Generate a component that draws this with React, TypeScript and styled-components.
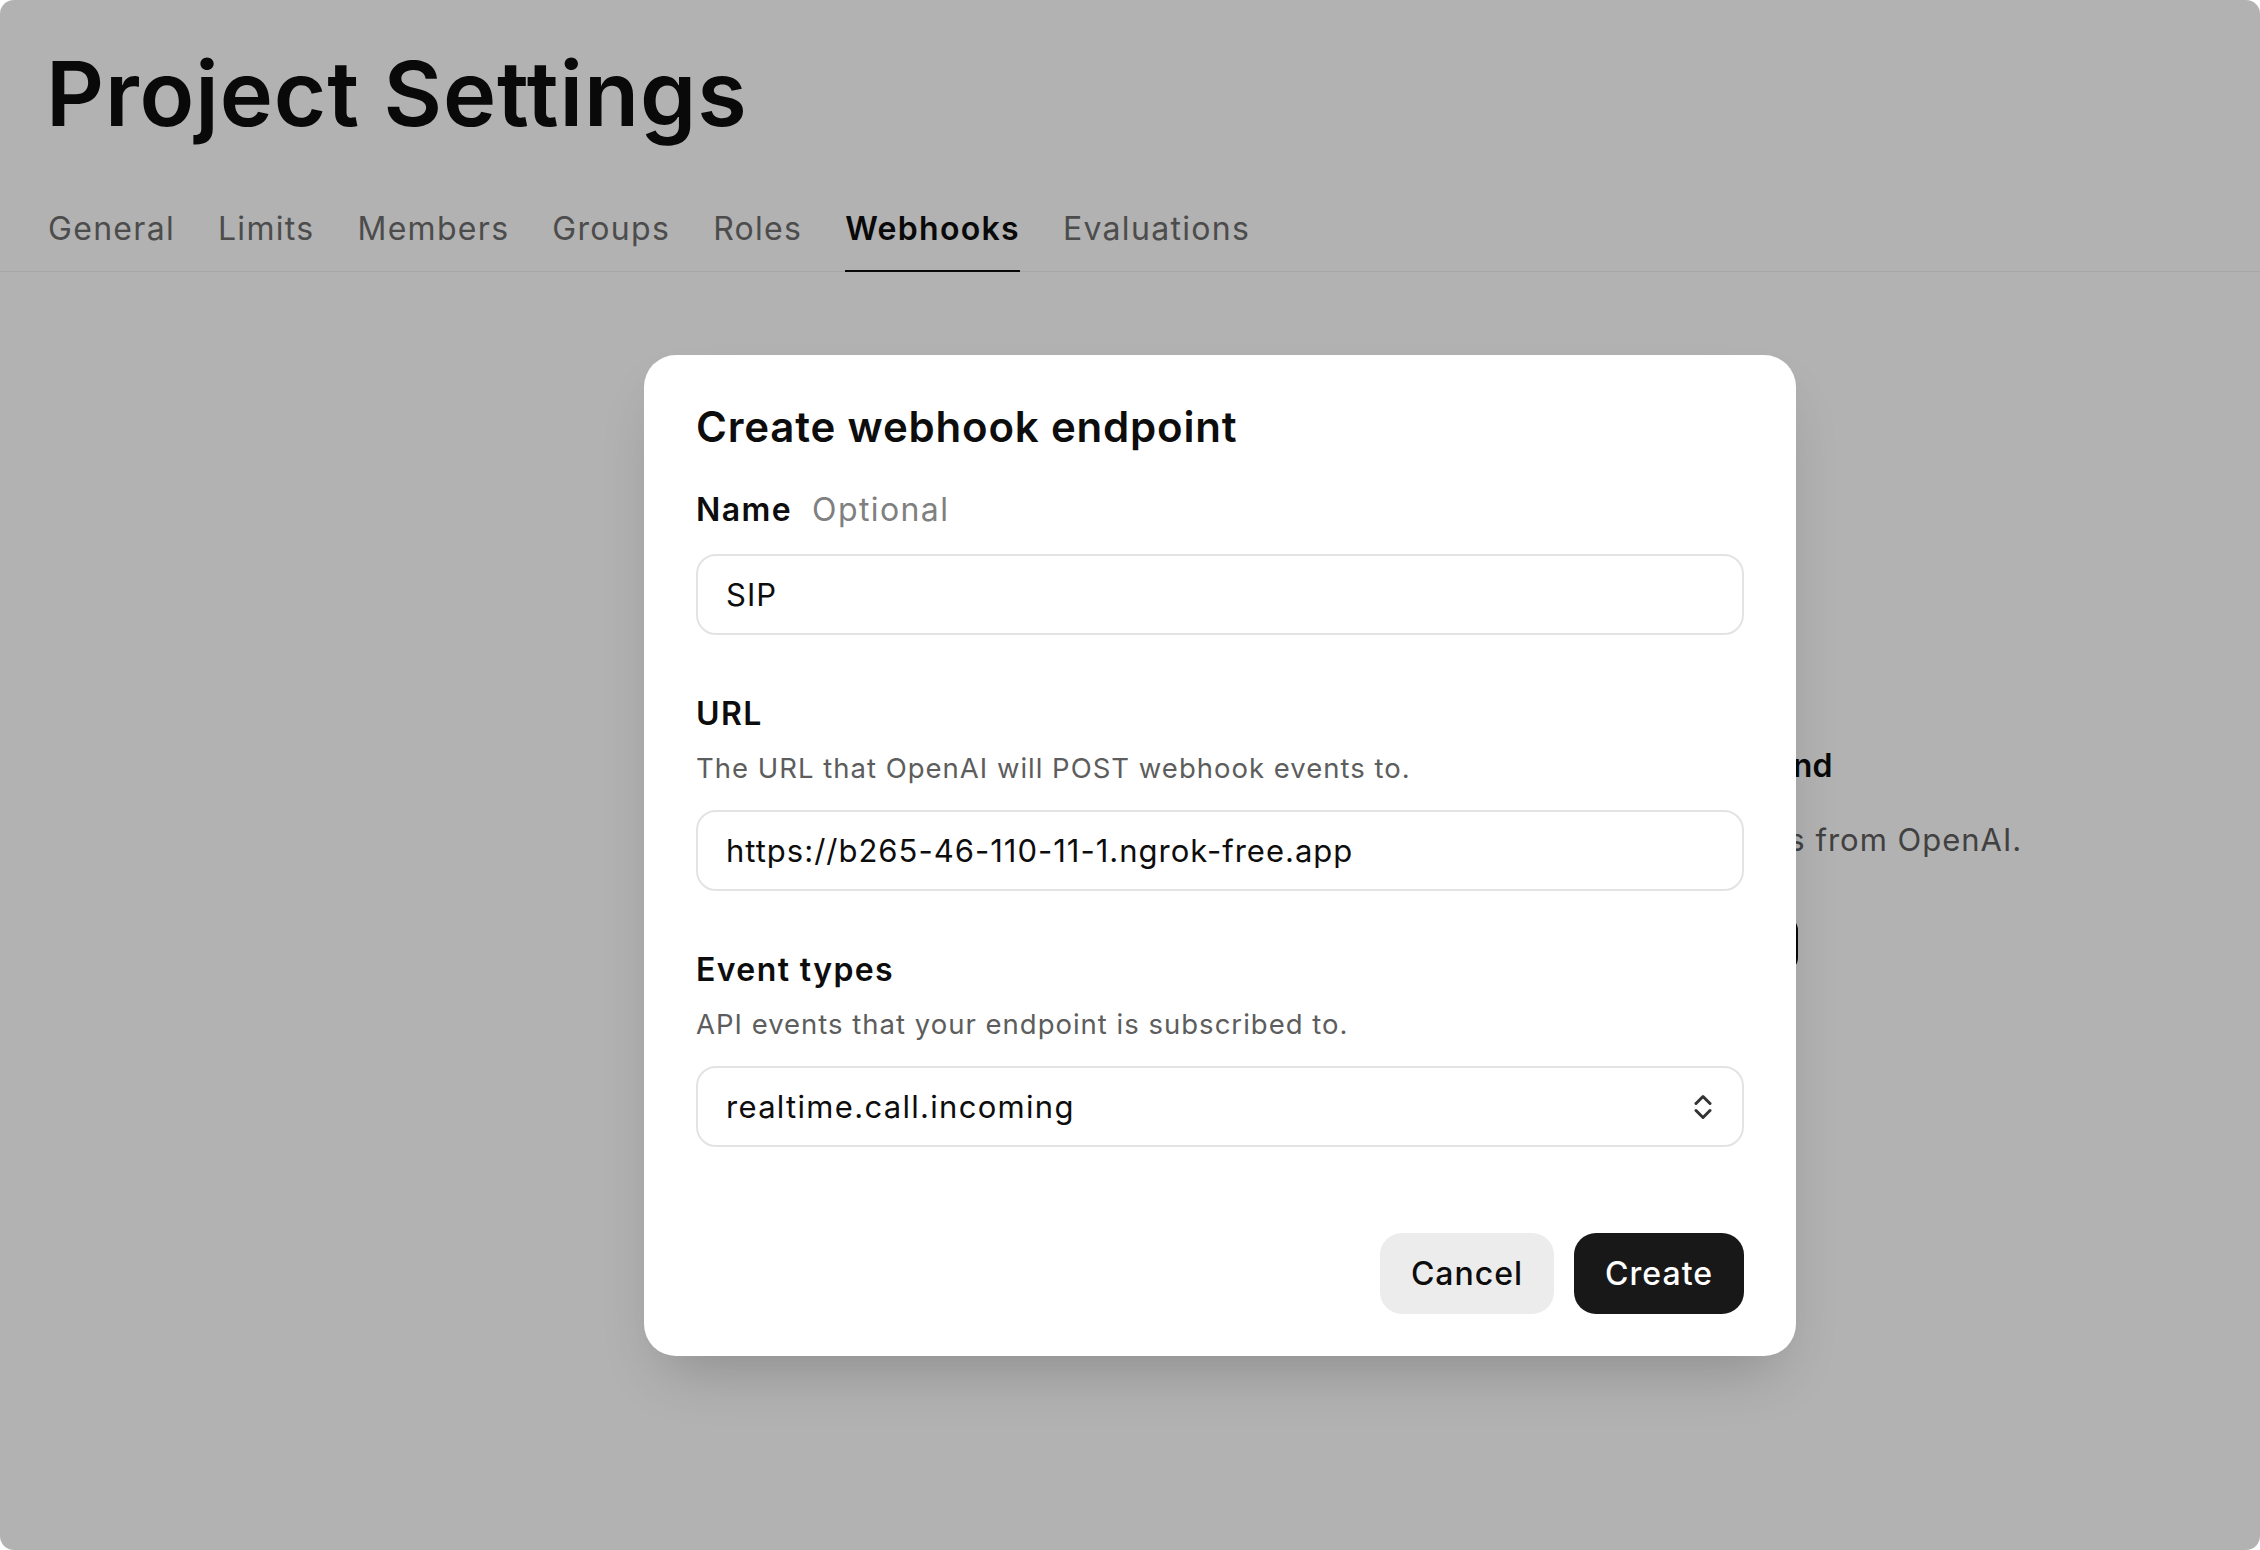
import styled, { createGlobalStyle } from 'styled-components';

const GlobalStyle = createGlobalStyle`
  html, body {
    margin: 0;
    padding: 0;
    background: #ffffff;
  }
  body {
    font-family: Inter, 'Noto Sans', sans-serif;
    color: #0d0d0d;
    -webkit-font-smoothing: antialiased;
  }
  * {
    box-sizing: border-box;
  }
`;

const Screen = styled.div`
  position: relative;
  width: 2260px;
  height: 1550px;
  overflow: hidden;
  border-radius: 14px;
  background: #ffffff;
`;

const Page = styled.main`
  padding-top: 40px;
`;

const PageTitle = styled.h1`
  margin: 0;
  padding: 0 46px;
  font-size: 90px;
  line-height: 108px;
  font-weight: 600;
  letter-spacing: 0.9px;
`;

const Tabs = styled.nav`
  display: flex;
  gap: 43px;
  margin-top: 61px;
  padding: 0 48px;
  border-bottom: 1px solid #efefef;
`;

const Tab = styled.a<{ $active?: boolean }>`
  display: block;
  margin-bottom: -1px;
  padding-bottom: 21px;
  font-size: 32px;
  line-height: 40px;
  letter-spacing: 1.3px;
  font-weight: ${(p) => (p.$active ? 600 : 400)};
  color: ${(p) => (p.$active ? '#0d0d0d' : '#6e6e6e')};
  border-bottom: 2px solid ${(p) => (p.$active ? '#0d0d0d' : 'transparent')};
  cursor: pointer;
`;

const EmptyState = styled.section`
  display: flex;
  flex-direction: column;
  align-items: center;
  padding: 472px 0 0 950px;
`;

const EmptyTitle = styled.h2`
  margin: 0;
  font-size: 32px;
  line-height: 44px;
  font-weight: 600;
`;

const EmptyText = styled.p`
  margin: 32px 0 0;
  font-size: 31px;
  line-height: 40px;
  letter-spacing: 1px;
  color: #5d5d5d;
`;

const PrimaryLarge = styled.button`
  margin-top: 58px;
  width: 386px;
  height: 52px;
  border: 0;
  border-radius: 12px;
  background: #0d0d0d;
  color: #ffffff;
  font: 500 26px Inter, sans-serif;
`;

const Overlay = styled.div`
  position: absolute;
  inset: 0;
  display: flex;
  align-items: flex-start;
  padding: 355px 0 0 644px;
  background: rgba(0, 0, 0, 0.3);
`;

const Dialog = styled.div`
  width: 1152px;
  padding: 44px 52px 42px;
  background: #ffffff;
  border-radius: 32px;
  box-shadow: 0 30px 60px -20px rgba(0, 0, 0, 0.22);
`;

const DialogTitle = styled.h3`
  margin: 0 0 35px;
  font-size: 42px;
  line-height: 56px;
  font-weight: 600;
  letter-spacing: 0.8px;
`;

const Fields = styled.div`
  display: flex;
  flex-direction: column;
  gap: 59px;
`;

const Field = styled.div`
  display: flex;
  flex-direction: column;
`;

const Label = styled.label`
  display: flex;
  gap: 20px;
  font-size: 32px;
  line-height: 40px;
  letter-spacing: 1.4px;
  font-weight: 600;
`;

const Hint = styled.span`
  font-weight: 400;
  color: #808080;
`;

const Description = styled.p`
  margin: 16px 0 0;
  font-size: 27.5px;
  line-height: 36px;
  letter-spacing: 1px;
  color: #5d5d5d;
`;

const TextInput = styled.input`
  margin-top: 24px;
  width: 100%;
  height: 81px;
  padding: 0 28px;
  border: 2px solid #e3e3e3;
  border-radius: 20px;
  background: #ffffff;
  font: 400 31px Inter, sans-serif;
  letter-spacing: 1px;
  color: #0d0d0d;
  outline: none;
`;

const SelectTrigger = styled.button`
  margin-top: 24px;
  display: flex;
  align-items: center;
  justify-content: space-between;
  width: 100%;
  height: 81px;
  padding: 0 30px 0 28px;
  border: 2px solid #e3e3e3;
  border-radius: 20px;
  background: #ffffff;
  font: 400 31px Inter, sans-serif;
  letter-spacing: 1.3px;
  color: #0d0d0d;
  text-align: left;
`;

const Footer = styled.div`
  display: flex;
  justify-content: flex-end;
  gap: 20px;
  margin-top: 86px;
`;

const Button = styled.button<{ $primary?: boolean }>`
  height: 81px;
  padding: 0 31px;
  border: 0;
  border-radius: 22px;
  font: 500 32px Inter, sans-serif;
  letter-spacing: 1px;
  background: ${(p) => (p.$primary ? '#181818' : '#ececec')};
  color: ${(p) => (p.$primary ? '#ffffff' : '#0d0d0d')};
  cursor: pointer;
`;

const UpDown = () => (
  <svg width="18" height="26" viewBox="0 0 18 26" fill="none" stroke="#333" strokeWidth="3" strokeLinecap="round" strokeLinejoin="round">
    <path d="M2 9.5 L9 2.5 L16 9.5" />
    <path d="M2 16.5 L9 23.5 L16 16.5" />
  </svg>
);

const tabs = ['General', 'Limits', 'Members', 'Groups', 'Roles', 'Webhooks', 'Evaluations'];

const App = () => {
  return (
    <Screen>
      <GlobalStyle />
      <Page>
        <PageTitle>Project Settings</PageTitle>
        <Tabs>
          {tabs.map((t) => (
            <Tab key={t} $active={t === 'Webhooks'}>
              {t}
            </Tab>
          ))}
        </Tabs>
        <EmptyState>
          <EmptyTitle>No webhook endpoints found</EmptyTitle>
          <EmptyText>Get real-time notifications about events from OpenAI.</EmptyText>
          <PrimaryLarge>Create</PrimaryLarge>
        </EmptyState>
      </Page>

      <Overlay>
        <Dialog role="dialog">
          <DialogTitle>Create webhook endpoint</DialogTitle>
          <Fields>
            <Field>
              <Label>
                Name <Hint>Optional</Hint>
              </Label>
              <TextInput defaultValue="SIP" />
            </Field>
            <Field>
              <Label>URL</Label>
              <Description>The URL that OpenAI will POST webhook events to.</Description>
              <TextInput defaultValue="https://b265-46-110-11-1.ngrok-free.app" />
            </Field>
            <Field>
              <Label>Event types</Label>
              <Description>API events that your endpoint is subscribed to.</Description>
              <SelectTrigger type="button">
                realtime.call.incoming
                <UpDown />
              </SelectTrigger>
            </Field>
          </Fields>
          <Footer>
            <Button>Cancel</Button>
            <Button $primary>Create</Button>
          </Footer>
        </Dialog>
      </Overlay>
    </Screen>
  );
};

export default App;
